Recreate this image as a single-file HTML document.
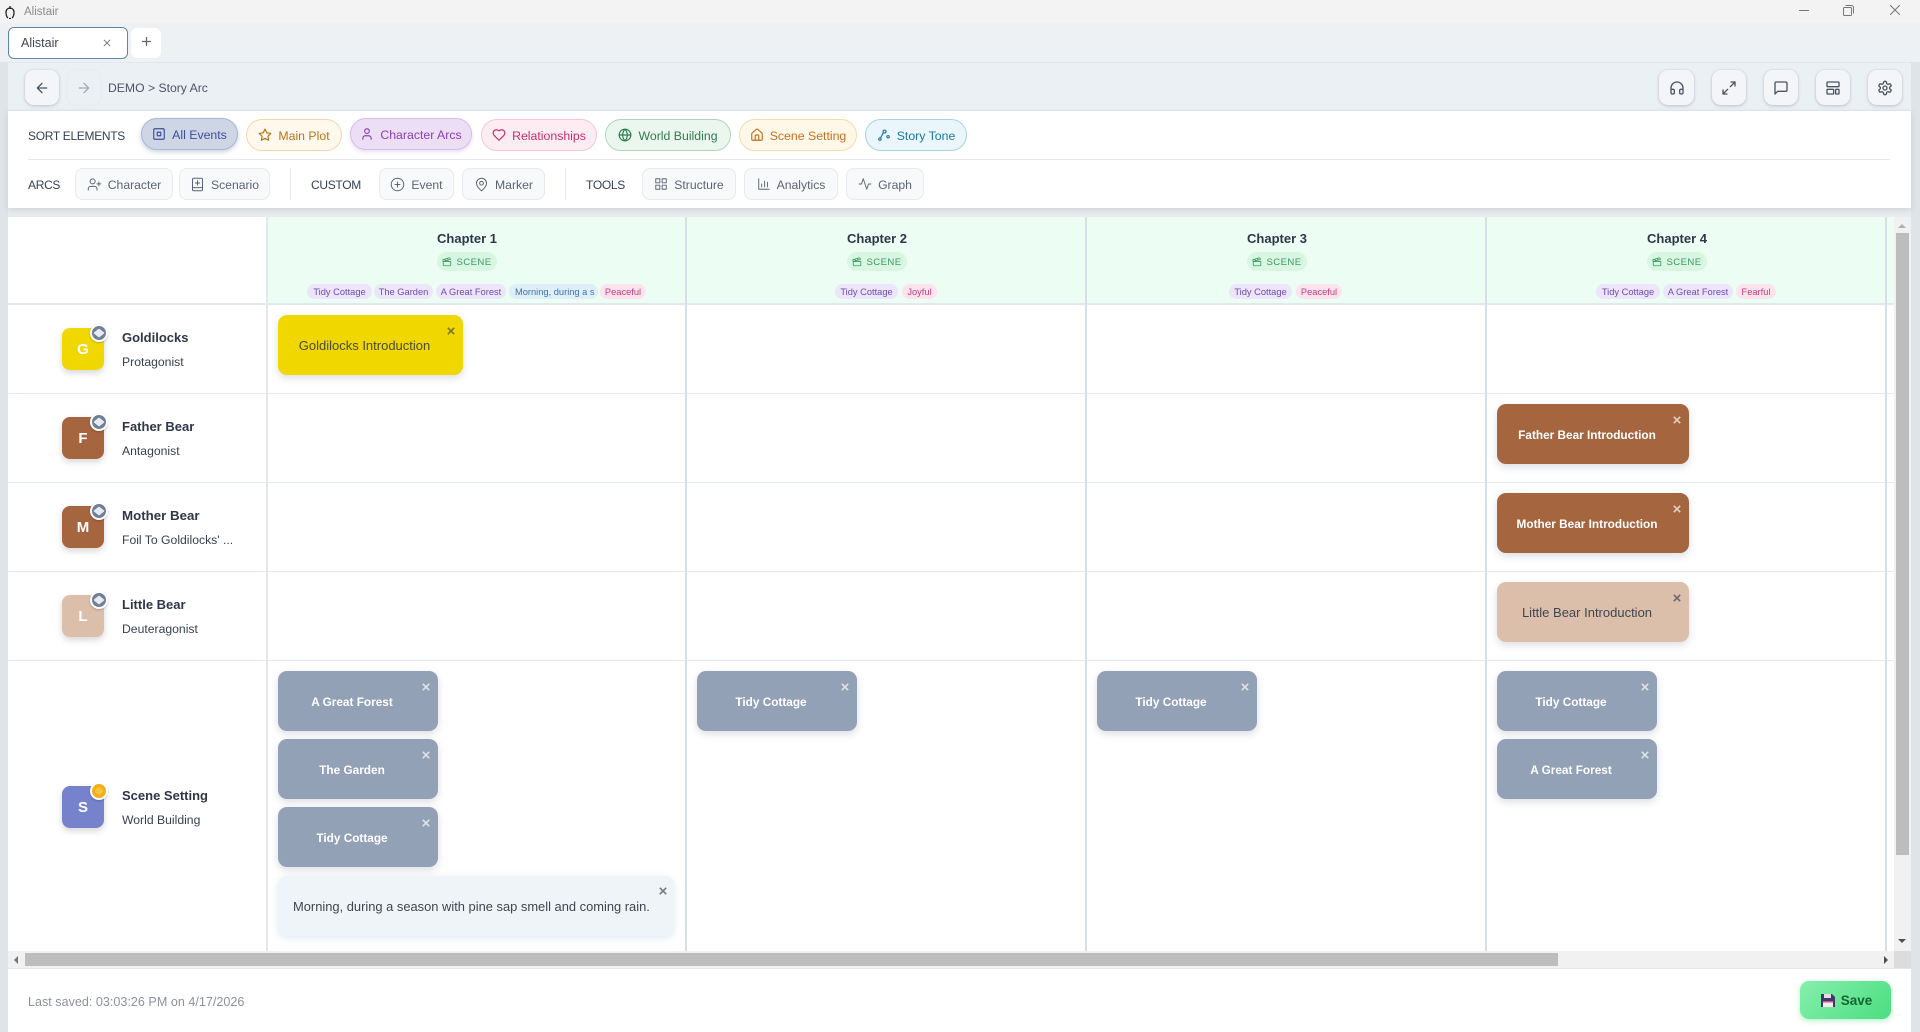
<!DOCTYPE html>
<html lang="en"><head><meta charset="utf-8"><title>Alistair</title>
<style>
*{box-sizing:border-box}
html,body{margin:0;padding:0;width:1920px;height:1032px;overflow:hidden;background:#fff;font-family:"Liberation Sans",sans-serif;color:#374151}
.a{position:absolute}
.t{position:absolute;white-space:nowrap;line-height:16px}
svg.i{fill:none;stroke:currentColor;stroke-width:2;stroke-linecap:round;stroke-linejoin:round;display:block;flex:none}
.sq{position:absolute;top:70px;height:35px;background:#f3f5f8;border-radius:9px;box-shadow:0 1px 3px rgba(60,70,90,.25),0 0 0 1px rgba(230,233,238,.8);display:flex;align-items:center;justify-content:center;color:#4b5563}
.pill{position:absolute;top:119px;height:32px;border-radius:16px;border:1px solid;display:flex;align-items:center;justify-content:center;gap:6px;font-size:12.3px;line-height:18px}
.pill span,.btn span{position:relative;top:1px}
.btn{position:absolute;top:168px;height:32px;background:#f8f9fb;border:1px solid #e6e9ee;border-radius:8px;color:#5b6472;display:flex;align-items:center;justify-content:center;gap:6px;font-size:12.2px}
.lab{position:absolute;font-size:12px;letter-spacing:-.3px;color:#374151;line-height:16px;white-space:nowrap}
.v{position:absolute;width:2px;top:217px;height:734px;background:#d6dfe9}
.h{position:absolute;left:8px;width:1886px;height:1px;background:#e2e8f0}
.ch{position:absolute;top:231px;font-size:13px;font-weight:bold;color:#2d3748;line-height:16px;transform:translateX(-50%);white-space:nowrap}
.sc{position:absolute;top:252px;width:60px;height:19px;margin-left:-30px;padding-top:1px;background:#d9f6e3;border-radius:10px;font-size:9.6px;letter-spacing:.4px;color:#3a9a62;display:flex;align-items:center;justify-content:center;gap:4px}
.tag{position:absolute;top:284px;height:15px;border-radius:8px;font-size:9.3px;line-height:16px;text-align:center;white-space:nowrap;overflow:hidden}
.p{background:#ede5fa;color:#6d4bb0}.b{background:#deeffa;color:#3f74a5}.r{background:#fce3ee;color:#bd3f7a}
.av{position:absolute;left:62px;width:42px;height:42px;border-radius:8px;color:#fff;font-weight:bold;font-size:15px;display:flex;align-items:center;justify-content:center;box-shadow:0 3px 7px rgba(0,0,0,.16)}
.bd{position:absolute;left:28px;top:-4px;width:18px;height:18px;border-radius:50%;border:2px solid #fff;background:#6f7f96;box-shadow:0 1px 2px rgba(0,0,0,.2)}
.bd:after{content:"";position:absolute;left:3px;top:3px;width:8px;height:8px;background:#e6ebf1;transform:scaleY(.8) rotate(45deg);border-radius:1px}
.bd.g{background:#f4ae1c}.bd.g:after{background:#f9c53f;border-radius:50%}
.nm{position:absolute;left:122px;font-size:13px;font-weight:bold;color:#2d3748;line-height:16px;white-space:nowrap}
.rl{position:absolute;left:122px;font-size:12.2px;color:#374151;line-height:16px;white-space:nowrap}
.c{position:absolute;height:60px;border-radius:9px;display:flex;align-items:center;justify-content:center;padding:2px 28px 0 16px;font-size:11.8px;white-space:nowrap;box-shadow:0 3px 8px rgba(80,90,120,.2);font-weight:bold;color:#fff}
.c.n{font-weight:normal;color:#4a4a3a;font-size:13px;padding-top:0}
.c svg{position:absolute;right:8px;top:12px;width:8px;height:8px;stroke:currentColor;stroke-width:2;opacity:.7;fill:none}
.gr{background:#92a1b5;width:160px}.br{background:#a5653f;width:192px;left:1497px}
</style></head><body>
<svg width="0" height="0" style="position:absolute"><defs>
<symbol id="x" viewBox="0 0 10 10"><path d="M1 1l8 8M9 1l-8 8"/></symbol>
<symbol id="clap" viewBox="0 0 24 24"><path d="M20.2 6 3 11l-.9-2.4c-.3-1.1.3-2.2 1.3-2.5l13.5-4c1.1-.3 2.2.3 2.5 1.3Z"/><path d="m6.2 5.3 3.1 3.9"/><path d="m12.4 3.4 3.1 4"/><path d="M3 11h18v8a2 2 0 0 1-2 2H5a2 2 0 0 1-2-2Z"/></symbol>
</defs></svg>

<!-- title bar -->
<div class="a" style="left:0;top:0;width:1920px;height:23px;background:#f3f3f3"></div>
<svg class="a" style="left:4px;top:6px;fill:none;stroke:#222;stroke-width:1.3" width="12" height="13" viewBox="0 0 12 13"><path d="M2 6a4 4 0 0 1 8 0c0 3-.6 5-2 6M2 6c0 3 .6 5 2 6M6 0v3M5 12.500h2"/></svg>
<div class="t" style="left:24px;top:4px;font-size:11.5px;color:#8a8a8a">Alistair</div>
<div class="a" style="left:1799px;top:10px;width:10px;height:1px;background:#777"></div>
<svg class="a" style="left:1843px;top:5px;fill:none;stroke:#777;stroke-width:1" width="11" height="11" viewBox="0 0 11 11"><rect x=".5" y="2.5" width="8" height="8" rx="1"/><path d="M2.5 .5h6a2 2 0 0 1 2 2v6"/></svg>
<svg class="a" style="left:1890px;top:5px;fill:none;stroke:#777;stroke-width:1" width="10" height="10" viewBox="0 0 10 10"><path d="M0 0l10 10M10 0L0 10"/></svg>

<!-- tab bar -->
<div class="a" style="left:0;top:23px;width:1920px;height:39px;background:#edf1f4"></div>
<div class="a" style="left:8px;top:27px;width:120px;height:32px;background:#fff;border:1px solid #5d86ad;border-radius:6px"></div>
<div class="t" style="left:21px;top:35px;font-size:12.5px;color:#3f4650">Alistair</div>
<svg class="a" style="left:103px;top:39px;stroke:#777;stroke-width:1.2;fill:none" width="8" height="8"><use href="#x"/></svg>
<div class="a" style="left:131px;top:28px;width:30px;height:30px;background:#fff;border-radius:6px"></div>
<svg class="a" style="left:142px;top:37px;stroke:#667;stroke-width:1.4;fill:none" width="9" height="9" viewBox="0 0 10 10"><path d="M5 0v10M0 5h10"/></svg>

<!-- nav -->
<div class="a" style="left:0;top:62px;width:8px;height:970px;background:#dfe4e8"></div>
<div class="a" style="left:1911px;top:62px;width:9px;height:970px;background:#dfe4e8"></div>
<div class="a" style="left:8px;top:62px;width:1903px;height:49px;background:#ebf0f4;border-top:1px solid #e1e7ec;border-bottom:1px solid #e2e8ee"></div>
<div class="sq" style="left:25px;width:34px"><svg class="i" width="16" height="16" viewBox="0 0 24 24"><path d="M19 12H5M12 19l-7-7 7-7"/></svg></div>
<div class="sq" style="left:67px;width:34px;background:#ebf0f4;box-shadow:0 0 0 1px #e7ecf0;color:#a3a9b1"><svg class="i" width="16" height="16" viewBox="0 0 24 24"><path d="M5 12h14M12 5l7 7-7 7"/></svg></div>
<div class="t" style="left:108px;top:80px;font-size:12.2px;color:#4b5563">DEMO &gt; Story Arc</div>
<div class="sq" style="left:1659px;width:35px"><svg class="i" width="16" height="16" viewBox="0 0 24 24"><path d="M3 14h3a2 2 0 0 1 2 2v3a2 2 0 0 1-2 2H5a2 2 0 0 1-2-2v-7a9 9 0 0 1 18 0v7a2 2 0 0 1-2 2h-1a2 2 0 0 1-2-2v-3a2 2 0 0 1 2-2h3"/></svg></div>
<div class="sq" style="left:1712px;width:34px"><svg class="i" width="16" height="16" viewBox="0 0 24 24"><path d="M15 3h6v6M21 3l-7 7M3 21l7-7M9 21H3v-6"/></svg></div>
<div class="sq" style="left:1764px;width:34px"><svg class="i" width="16" height="16" viewBox="0 0 24 24"><path d="M21 15a2 2 0 0 1-2 2H7l-4 4V5a2 2 0 0 1 2-2h14a2 2 0 0 1 2 2z"/></svg></div>
<div class="sq" style="left:1816px;width:34px"><svg class="i" width="16" height="16" viewBox="0 0 24 24"><rect x="3" y="3" width="18" height="7" rx="1"/><rect x="3" y="14" width="10" height="7" rx="1"/><rect x="16" y="14" width="5" height="7" rx="1"/></svg></div>
<div class="sq" style="left:1868px;width:34px"><svg class="i" width="16" height="16" viewBox="0 0 24 24"><path d="M12.22 2h-.44a2 2 0 0 0-2 2v.18a2 2 0 0 1-1 1.73l-.43.25a2 2 0 0 1-2 0l-.15-.08a2 2 0 0 0-2.73.73l-.22.38a2 2 0 0 0 .73 2.73l.15.1a2 2 0 0 1 1 1.72v.51a2 2 0 0 1-1 1.74l-.15.09a2 2 0 0 0-.73 2.73l.22.38a2 2 0 0 0 2.73.73l.15-.08a2 2 0 0 1 2 0l.43.25a2 2 0 0 1 1 1.73V20a2 2 0 0 0 2 2h.44a2 2 0 0 0 2-2v-.18a2 2 0 0 1 1-1.73l.43-.25a2 2 0 0 1 2 0l.15.08a2 2 0 0 0 2.73-.73l.22-.39a2 2 0 0 0-.73-2.73l-.15-.08a2 2 0 0 1-1-1.74v-.5a2 2 0 0 1 1-1.74l.15-.09a2 2 0 0 0 .73-2.73l-.22-.38a2 2 0 0 0-2.73-.73l-.15.08a2 2 0 0 1-2 0l-.43-.25a2 2 0 0 1-1-1.73V4a2 2 0 0 0-2-2z"/><circle cx="12" cy="12" r="3"/></svg></div>

<!-- toolbar panel -->
<div class="a" style="left:8px;top:111px;width:1903px;height:106px;background:#e9ecef"></div>
<div class="a" style="left:8px;top:111px;width:1903px;height:97px;background:#fff;box-shadow:0 2px 6px rgba(90,100,120,.18)"></div>
<div class="lab" style="left:28px;top:128px">SORT ELEMENTS</div>
<div class="pill" style="left:141px;width:97px;top:118px;background:#ced6e6;border-color:#aab8d3;color:#3b4f9a;box-shadow:0 2px 5px rgba(80,100,150,.3)"><svg class="i" width="14" height="14" viewBox="0 0 24 24"><rect x="3" y="3" width="18" height="18" rx="2"/><rect x="9" y="9" width="6" height="6"/></svg><span>All Events</span></div>
<div class="pill" style="left:246px;width:96px;background:#fff8ec;border-color:#f0d9ae;color:#b9721a"><svg class="i" width="14" height="14" viewBox="0 0 24 24"><polygon points="12 2 15.09 8.26 22 9.27 17 14.14 18.18 21.02 12 17.77 5.82 21.02 7 14.14 2 9.27 8.91 8.26 12 2"/></svg><span>Main Plot</span></div>
<div class="pill" style="left:350px;width:122px;top:118px;background:#ecdff5;border-color:#d4bfe6;color:#8b3fb0;box-shadow:0 2px 4px rgba(130,80,170,.18)"><svg class="i" width="14" height="14" viewBox="0 0 24 24"><path d="M19 21v-2a4 4 0 0 0-4-4H9a4 4 0 0 0-4 4v2"/><circle cx="12" cy="7" r="4"/></svg><span>Character Arcs</span></div>
<div class="pill" style="left:481px;width:116px;background:#fdedf3;border-color:#f2c6d6;color:#c2306a"><svg class="i" width="14" height="14" viewBox="0 0 24 24"><path d="M19 14c1.49-1.46 3-3.21 3-5.5A5.5 5.5 0 0 0 16.5 3c-1.76 0-3 .5-4.5 2-1.5-1.5-2.74-2-4.5-2A5.5 5.5 0 0 0 2 8.5c0 2.3 1.5 4.05 3 5.5l7 7Z"/></svg><span>Relationships</span></div>
<div class="pill" style="left:605px;width:126px;background:#eaf6ee;border-color:#aed6bb;color:#2e7d4c"><svg class="i" width="14" height="14" viewBox="0 0 24 24"><circle cx="12" cy="12" r="10"/><path d="M12 2a14.5 14.5 0 0 0 0 20 14.5 14.5 0 0 0 0-20M2 12h20"/></svg><span>World Building</span></div>
<div class="pill" style="left:739px;width:118px;background:#fff7e8;border-color:#f4dcb0;color:#c4701c"><svg class="i" width="14" height="14" viewBox="0 0 24 24"><path d="M3 10a2 2 0 0 1 .709-1.528l7-5.999a2 2 0 0 1 2.582 0l7 5.999A2 2 0 0 1 21 10v9a2 2 0 0 1-2 2H5a2 2 0 0 1-2-2z"/><path d="M15 21v-8a1 1 0 0 0-1-1h-4a1 1 0 0 0-1 1v8"/></svg><span>Scene Setting</span></div>
<div class="pill" style="left:865px;width:102px;background:#eaf6fb;border-color:#a6d3e3;color:#1a7a9e"><svg class="i" width="14" height="14" viewBox="0 0 24 24"><circle cx="19" cy="15" r="2"/><circle cx="5" cy="19" r="2"/><circle cx="13" cy="6" r="2.5"/><path d="M6 17l5-9"/></svg><span>Story Tone</span></div>
<div class="a" style="left:28px;top:159px;width:1862px;height:1px;background:#e5e8ec"></div>

<div class="lab" style="left:28px;top:177px">ARCS</div>
<div class="btn" style="left:75px;width:98px"><svg class="i" style="stroke-width:1.6" width="15" height="15" viewBox="0 0 24 24"><path d="M16 21v-2a4 4 0 0 0-4-4H6a4 4 0 0 0-4 4v2"/><circle cx="9" cy="7" r="4"/><path d="M19 8v6M22 11h-6"/></svg><span>Character</span></div>
<div class="btn" style="left:179px;width:91px"><svg class="i" style="stroke-width:1.6" width="15" height="15" viewBox="0 0 24 24"><rect x="4" y="2" width="16" height="20" rx="2"/><path d="M4 17h16M12 6v7M8.500 9.500h7"/></svg><span>Scenario</span></div>
<div class="a" style="left:290px;top:168px;width:1px;height:32px;background:#e3e6ea"></div>
<div class="lab" style="left:311px;top:177px">CUSTOM</div>
<div class="btn" style="left:379px;width:75px"><svg class="i" style="stroke-width:1.6" width="15" height="15" viewBox="0 0 24 24"><circle cx="12" cy="12" r="10"/><path d="M12 8v8M8 12h8"/></svg><span>Event</span></div>
<div class="btn" style="left:462px;width:83px"><svg class="i" style="stroke-width:1.6" width="15" height="15" viewBox="0 0 24 24"><path d="M20 10c0 6-8 12-8 12s-8-6-8-12a8 8 0 0 1 16 0Z"/><circle cx="12" cy="10" r="3"/></svg><span>Marker</span></div>
<div class="a" style="left:565px;top:168px;width:1px;height:32px;background:#e3e6ea"></div>
<div class="lab" style="left:586px;top:177px">TOOLS</div>
<div class="btn" style="left:642px;width:94px"><svg class="i" style="stroke-width:1.6" width="14" height="14" viewBox="0 0 24 24"><rect x="3" y="3" width="7" height="7"/><rect x="14" y="3" width="7" height="7"/><rect x="3" y="14" width="7" height="7"/><rect x="14" y="14" width="7" height="7"/></svg><span>Structure</span></div>
<div class="btn" style="left:744px;width:94px"><svg class="i" style="stroke-width:1.6" width="14" height="14" viewBox="0 0 24 24"><path d="M3 3v18h18M8 17v-5M13 17V7M18 17v-8"/></svg><span>Analytics</span></div>
<div class="btn" style="left:846px;width:78px"><svg class="i" style="stroke-width:1.6" width="14" height="14" viewBox="0 0 24 24"><path d="M22 12h-4l-3 9L9 3l-3 9H2"/></svg><span>Graph</span></div>

<!-- grid -->
<div class="a" style="left:8px;top:217px;width:1886px;height:734px;background:#fff"></div>
<div class="a" style="left:268px;top:217px;width:1626px;height:86px;background:#ecfdf3"></div>
<div class="a" style="left:8px;top:303px;width:1886px;height:2px;background:#e2e8f0"></div>
<div class="h" style="top:393px"></div><div class="h" style="top:482px"></div><div class="h" style="top:571px"></div><div class="h" style="top:660px"></div>
<div class="v" style="left:266px;background:#e2e8ee"></div><div class="v" style="left:685px"></div><div class="v" style="left:1085px"></div><div class="v" style="left:1485px"></div><div class="v" style="left:1885px"></div>

<div class="ch" style="left:467px">Chapter 1</div><div class="ch" style="left:877px">Chapter 2</div><div class="ch" style="left:1277px">Chapter 3</div><div class="ch" style="left:1677px">Chapter 4</div>
<div class="sc" style="left:467px"><svg width="10" height="10" style="fill:none;stroke:currentColor;stroke-width:2" viewBox="0 0 24 24"><use href="#clap"/></svg>SCENE</div>
<div class="sc" style="left:877px"><svg width="10" height="10" style="fill:none;stroke:currentColor;stroke-width:2" viewBox="0 0 24 24"><use href="#clap"/></svg>SCENE</div>
<div class="sc" style="left:1277px"><svg width="10" height="10" style="fill:none;stroke:currentColor;stroke-width:2" viewBox="0 0 24 24"><use href="#clap"/></svg>SCENE</div>
<div class="sc" style="left:1677px"><svg width="10" height="10" style="fill:none;stroke:currentColor;stroke-width:2" viewBox="0 0 24 24"><use href="#clap"/></svg>SCENE</div>

<div class="tag p" style="left:307px;width:65px">Tidy Cottage</div><div class="tag p" style="left:374px;width:59px">The Garden</div><div class="tag p" style="left:436px;width:70px">A Great Forest</div>
<div class="tag b" style="left:509px;width:89px;text-align:left;padding-left:6px">Morning, during a s</div><div class="tag r" style="left:600px;width:46px">Peaceful</div>
<div class="tag p" style="left:835px;width:63px">Tidy Cottage</div><div class="tag r" style="left:902px;width:35px">Joyful</div>
<div class="tag p" style="left:1229px;width:63px">Tidy Cottage</div><div class="tag r" style="left:1296px;width:46px">Peaceful</div>
<div class="tag p" style="left:1596px;width:64px">Tidy Cottage</div><div class="tag p" style="left:1663px;width:70px">A Great Forest</div><div class="tag r" style="left:1736px;width:40px">Fearful</div>

<!-- row labels -->
<div class="av" style="top:328px;background:#f0d700">G<span class="bd"></span></div><div class="nm" style="left:122px;top:330px">Goldilocks</div><div class="rl" style="top:354px">Protagonist</div>
<div class="av" style="top:417px;background:#a5653f">F<span class="bd"></span></div><div class="nm" style="top:419px">Father Bear</div><div class="rl" style="top:443px">Antagonist</div>
<div class="av" style="top:506px;background:#a5653f">M<span class="bd"></span></div><div class="nm" style="top:508px;font-size:13.3px">Mother Bear</div><div class="rl" style="top:532px">Foil To Goldilocks' ...</div>
<div class="av" style="top:595px;background:#dcbfab">L<span class="bd"></span></div><div class="nm" style="top:597px">Little Bear</div><div class="rl" style="top:621px">Deuteragonist</div>
<div class="av" style="top:786px;background:#7682cc">S<span class="bd g"></span></div><div class="nm" style="top:788px">Scene Setting</div><div class="rl" style="top:812px">World Building</div>

<!-- cards -->
<div class="c n" style="left:278px;top:315px;width:185px;background:#f0d700">Goldilocks Introduction<svg viewBox="0 0 10 10"><use href="#x"/></svg></div>
<div class="c br" style="top:404px">Father Bear Introduction<svg viewBox="0 0 10 10"><use href="#x"/></svg></div>
<div class="c br" style="top:493px">Mother Bear Introduction<svg viewBox="0 0 10 10"><use href="#x"/></svg></div>
<div class="c n" style="left:1497px;top:582px;width:192px;background:#dcbfab;color:#3f4650">Little Bear Introduction<svg viewBox="0 0 10 10"><use href="#x"/></svg></div>

<div class="c gr" style="left:278px;top:671px">A Great Forest<svg viewBox="0 0 10 10"><use href="#x"/></svg></div>
<div class="c gr" style="left:278px;top:739px">The Garden<svg viewBox="0 0 10 10"><use href="#x"/></svg></div>
<div class="c gr" style="left:278px;top:807px">Tidy Cottage<svg viewBox="0 0 10 10"><use href="#x"/></svg></div>
<div class="c n" style="left:278px;top:876px;width:396px;background:#eff4f9;color:#3f4650;box-shadow:0 2px 8px rgba(120,170,220,.25);padding:0 15px;justify-content:flex-start;font-size:12.9px">Morning, during a season with pine sap smell and coming rain.<svg style="right:7px;top:11px" viewBox="0 0 10 10"><use href="#x"/></svg></div>
<div class="c gr" style="left:697px;top:671px">Tidy Cottage<svg viewBox="0 0 10 10"><use href="#x"/></svg></div>
<div class="c gr" style="left:1097px;top:671px">Tidy Cottage<svg viewBox="0 0 10 10"><use href="#x"/></svg></div>
<div class="c gr" style="left:1497px;top:671px">Tidy Cottage<svg viewBox="0 0 10 10"><use href="#x"/></svg></div>
<div class="c gr" style="left:1497px;top:739px">A Great Forest<svg viewBox="0 0 10 10"><use href="#x"/></svg></div>

<!-- scrollbars -->
<div class="a" style="left:1894px;top:217px;width:17px;height:734px;background:#f1f1f1"></div>
<div class="a" style="left:1896px;top:233px;width:13px;height:622px;background:#bdbdbd"></div>
<div class="a" style="left:1898px;top:224px;width:0;height:0;border:4px solid transparent;border-top:0;border-bottom:4px solid #b0b0b0"></div>
<div class="a" style="left:1898px;top:939px;width:0;height:0;border:4px solid transparent;border-bottom:0;border-top:4px solid #505050"></div>
<div class="a" style="left:8px;top:951px;width:1886px;height:17px;background:#f1f1f1"></div>
<div class="a" style="left:1894px;top:951px;width:17px;height:17px;background:#dcdcdc"></div>
<div class="a" style="left:25px;top:953px;width:1533px;height:13px;background:#bdbdbd"></div>
<div class="a" style="left:14px;top:956px;width:0;height:0;border:4px solid transparent;border-left:0;border-right:4px solid #777"></div>
<div class="a" style="left:1884px;top:956px;width:0;height:0;border:4px solid transparent;border-right:0;border-left:4px solid #505050"></div>

<!-- footer -->
<div class="a" style="left:8px;top:968px;width:1903px;height:1px;background:#e5e7eb"></div>
<div class="t" style="left:28px;top:994px;font-size:12.6px;color:#8b929c">Last saved: 03:03:26 PM on 4/17/2026</div>
<div class="a" style="left:1800px;top:981px;width:91px;height:38px;border-radius:9px;padding-left:2px;background:linear-gradient(135deg,#86efac,#4ade80);box-shadow:0 2px 6px rgba(74,222,128,.4);display:flex;align-items:center;justify-content:center;gap:6px;color:#166534;font-weight:bold;font-size:13.5px">
<svg width="14" height="14" viewBox="0 0 14 14" style="display:block"><path d="M0 1h11l3 3v10H0z" fill="#3d3a6b"/><rect x="3" y="1" width="7" height="4" fill="#e8d8ea"/><rect x="2" y="8" width="10" height="6" fill="#f5e8ee"/><rect x="2" y="8" width="10" height="1.500" fill="#c9577a"/></svg>Save</div>
</body></html>
